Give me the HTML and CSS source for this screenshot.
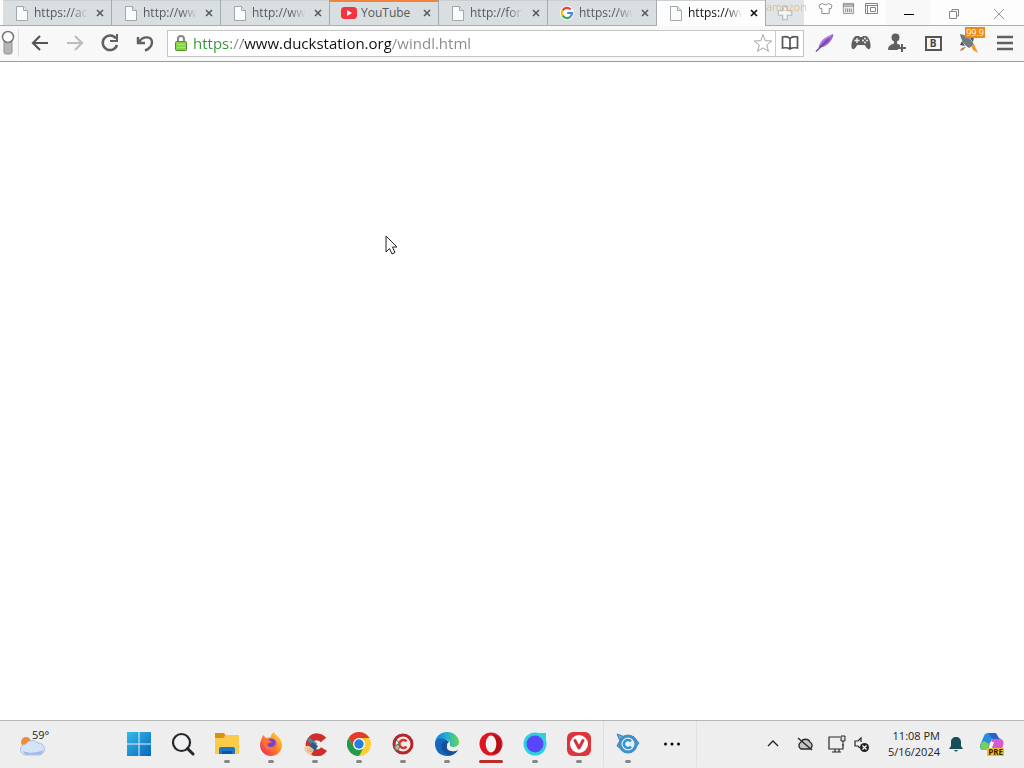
FILE: index.html
```html
<!DOCTYPE html>
<html lang="en">
<head>
<meta charset="utf-8">
<meta name="viewport" content="width=device-width, initial-scale=1">
<title>https://www.duckstation.org/windl.html</title>
<link rel="stylesheet" href="styles.css">
</head>
<body>
<svg class="defs" aria-hidden="true">
  <symbol id="page" viewBox="0 0 12 15"><path d="M.5.5h7l4 4v10H.5z" fill="#fafbfb" stroke="#a2a6a8"/><path d="M7.500.5v4h4" fill="#e2e4e5" stroke="#a2a6a8"/></symbol>
  <symbol id="cross" viewBox="0 0 8 8"><path d="M1 1l6 6M7 1L1 7" fill="none" stroke="currentColor" stroke-width="1.600"/></symbol>
</svg>
<header class="browser">
  <div class="titlebar">
    <nav class="tabs" aria-label="Tabs">
      <div class="tab"><svg class="fav"><use href="#page"/></svg><a class="label" href="#">https://ac</a><button class="close" aria-label="Close tab"><svg><use href="#cross"/></svg></button></div>
      <div class="tab"><svg class="fav"><use href="#page"/></svg><a class="label" href="#">http://ww</a><button class="close" aria-label="Close tab"><svg><use href="#cross"/></svg></button></div>
      <div class="tab"><svg class="fav"><use href="#page"/></svg><a class="label" href="#">http://ww</a><button class="close" aria-label="Close tab"><svg><use href="#cross"/></svg></button></div>
      <div class="tab loud"><svg class="fav wide" viewBox="0 0 16 12"><rect y="0" width="16" height="12" rx="3.500" fill="#f5333f"/><path d="M6 3l5 3-5 3z" fill="#fff"/></svg><a class="label plain" href="#">YouTube</a><button class="close" aria-label="Close tab"><svg><use href="#cross"/></svg></button></div>
      <div class="tab"><svg class="fav"><use href="#page"/></svg><a class="label" href="#">http://for</a><button class="close" aria-label="Close tab"><svg><use href="#cross"/></svg></button></div>
      <div class="tab"><svg class="fav round" viewBox="0 0 14 14"><circle cx="7" cy="7" r="7" fill="#fff"/><g fill="none" stroke-width="2.200"><path d="M2.600 4.500A5 5 0 0 1 10.600 3.400" stroke="#ea4335"/><path d="M2.600 4.500a5 5 0 0 0 0 5" stroke="#fbbc05"/><path d="M2.600 9.500a5 5 0 0 0 7.800 1.200" stroke="#34a853"/><path d="M10.400 10.700A5 5 0 0 0 12 7H7.200" stroke="#4285f4"/></g></svg><a class="label" href="#">https://ww</a><button class="close" aria-label="Close tab"><svg><use href="#cross"/></svg></button></div>
      <div class="tab active"><svg class="fav"><use href="#page"/></svg><a class="label" href="#" aria-current="page">https://ww</a><button class="close" aria-label="Close tab"><svg><use href="#cross"/></svg></button></div>
      <button class="newtab" aria-label="New tab"><span class="ghost">amazon</span><svg viewBox="0 0 16 16"><path d="M6 2h4v4h4v4h-4v4H6v-4H2V6h4z" fill="#f4f5f5" stroke="#b4b8ba"/></svg></button>
    </nav>
    <div class="tools">
      <button aria-label="Theme"><svg viewBox="0 0 16 14"><path d="M5 1.500C6 3.500 10 3.500 11 1.500l4 2-1 3.500h-2v5.500H4V7H2L1 3.500z" fill="#fff" stroke="#858585"/></svg></button>
      <button aria-label="Panel"><svg viewBox="0 0 14 14"><path d="M1.500 1.500h11v11h-11z" fill="#eee" stroke="#929292"/><path d="M1 3h12M1 4.500h12M4 7v4M6 7v4M8 7v4M10 7v4" stroke="#858585"/></svg></button>
      <button aria-label="Closed tabs"><svg viewBox="0 0 15 13"><path d="M1.500 1.500h12v10h-12z" fill="#fff" stroke="#858585"/><path d="M1 3.500h13M3.500 3v8M6.500 5.500h5v4h-5z" fill="none" stroke="#858585"/></svg></button>
    </div>
    <div class="window">
      <button class="min" aria-label="Minimize"><svg viewBox="0 0 12 12"><path d="M1 6.500h10" stroke="#000"/></svg></button>
      <button aria-label="Restore"><svg viewBox="0 0 12 12"><path d="M1.500 3.500h7v7h-7zM4 3V1.500h6.500V8H9" fill="none" stroke="#888"/></svg></button>
      <button aria-label="Close"><svg viewBox="0 0 12 12"><path d="M1 1l10 10M11 1L1 11" stroke="#999"/></svg></button>
    </div>
  </div>
  <div class="toolbar">
    <button class="panel" aria-label="Toggle panels"><svg viewBox="0 0 16 26"><rect x="4" y="6" width="8" height="18" rx="2" fill="#b5b5b5" stroke="#919191"/><circle cx="8" cy="7" r="5.500" fill="#fff" stroke="#777" stroke-width="1.500"/></svg></button>
    <div class="navs">
      <button aria-label="Back"><svg viewBox="0 0 20 20"><path d="M18 10H4M10 3l-7 7 7 7" fill="none" stroke="#555" stroke-width="2.200"/></svg></button>
      <button aria-label="Forward"><svg viewBox="0 0 20 20"><path d="M2 10h14M10 3l7 7-7 7" fill="none" stroke="#bdbdbd" stroke-width="2.200"/></svg></button>
      <button aria-label="Reload"><svg viewBox="0 0 20 20"><path d="M16 5.500A7.300 7.300 0 1 0 17 12" fill="none" stroke="#606060" stroke-width="2.500"/><path d="M18 1v8h-8V7h6V1z" fill="#606060"/></svg></button>
      <button aria-label="Undo"><svg viewBox="0 0 20 20"><path d="M4 9C8 2.500 17 3 17 9.500c0 4-4 7-7 8M3 4v6h7" fill="none" stroke="#606060" stroke-width="2.400"/></svg></button>
    </div>
    <form class="address">
      <svg class="lock" viewBox="0 0 12 16"><path d="M3 7V4a3 3 0 0 1 6 0v3" fill="none" stroke="#888" stroke-width="2"/><rect x=".5" y="6.500" width="11" height="9" rx="1" fill="#85d443" stroke="#4e8f21"/><path d="M2 9.500h8M2 12.500h8" stroke="#a5e76c"/></svg>
      <input class="url" type="text" aria-label="Address" value="https://www.duckstation.org/windl.html">
      <button type="button" class="star" aria-label="Bookmark"><svg viewBox="0 0 20 20"><path d="M10 1.500l2.300 6.200 6.500.3-5.100 4 1.800 6.400-5.500-3.600-5.500 3.600L6.300 12l-5.100-4 6.500-.3z" fill="#fff" stroke="#a5a5a5"/></svg></button>
      <button type="button" class="book" aria-label="Reader"><svg viewBox="0 0 18 16"><path d="M9 3.500C7 1.500 4 1.500 1.500 2v11c3-.5 5.500-.5 7.500 1 2-1.500 4.500-1.500 7.500-1V2C14 1.500 11 1.500 9 3.500zV14" fill="#fff" stroke="#555" stroke-width="1.700"/></svg></button>
    </form>
    <div class="ext">
      <button aria-label="Notes"><svg viewBox="0 0 20 20"><path d="M18.500 1C9 4 5 8 3.500 15 10 14.500 17.500 9 18.500 1z" fill="#9b60cc"/><path d="M1 18.500L14 6" stroke="#6f3c9f" stroke-width="1.200"/><path d="M5 12c2-5 7-8 11-9" fill="none" stroke="#c69ce6"/></svg></button>
      <button aria-label="Games"><svg viewBox="0 0 20 20"><path d="M5 3h3l1 1h2l1-1h3c3 1 5 7 4.500 11-.5 3-3 3-5-1l-1-1h-7l-1 1c-2 4-4.500 4-5 1C0 10 2 4 5 3z" fill="#606060"/><path d="M6 5v5M3.500 7.500h5" stroke="#eee" stroke-width="1.400"/><circle cx="14" cy="5.500" r="1" fill="#eee"/><circle cx="14" cy="9.500" r="1" fill="#eee"/><circle cx="12" cy="7.500" r="1" fill="#eee"/><circle cx="16" cy="7.500" r="1" fill="#eee"/></svg></button>
      <button aria-label="Add user"><svg viewBox="0 0 20 20"><circle cx="8.500" cy="4.500" r="4" fill="#606060"/><path d="M7 7h3v3.500l3 1.500v2h-2v3H1c0-4 2-5 6-6.500z" fill="#606060"/><path d="M15 11v8M11 15h8" stroke="#606060" stroke-width="2"/></svg></button>
      <button aria-label="Block"><span class="bbox">B</span></button>
      <button class="rocket" aria-label="Messages"><svg viewBox="0 0 20 20"><path d="M1 1c6 1 11 4 14 11l-5 3C5 12 2 7 1 1z" fill="#727a80"/><path d="M3 8l-2 4 5 1zM11 5l4-1-1 5z" fill="#4d5358"/><path d="M12 13l3-2 4 9-5-3z" fill="#f29a26"/><path d="M1 18c1-3 3-4 6-4l-3 3z" fill="#bb7544"/></svg><span class="badge">99.9</span></button>
      <button aria-label="Menu"><svg viewBox="0 0 20 20"><path d="M2 4h16M2 10h16M2 16h16" stroke="#606060" stroke-width="2.600"/></svg></button>
    </div>
  </div>
</header>
<main class="page">
  <svg class="pointer" viewBox="0 0 13 20" aria-hidden="true"><path d="M1 1v16l3.500-3.500 2.500 5.500 3-1.500L7.500 12H12z" fill="#fff" stroke="#222"/></svg>
</main>
<footer class="taskbar">
  <div class="left"><button class="weather" aria-label="Weather 59 degrees"><svg viewBox="0 0 26 20"><circle cx="6" cy="6" r="5" fill="#f08b36"/><path d="M7 19a6 5.500 0 0 1-1-11 7 6 0 0 1 12-1 6 6 0 0 1 1 12z" fill="#d5e3f8" stroke="#a7bfe5"/><path d="M3 15c6 3 15 2 20-1-1 4-3 4.500-5 4.500H7c-2 0-3-1-4-3.500z" fill="#9bb9ea"/></svg><span>59°</span></button></div>
  <nav class="apps" aria-label="Applications">
    <button aria-label="Start"><svg viewBox="0 0 24 24"><defs><linearGradient id="win" x2="1" y2="1"><stop stop-color="#35bced"/><stop offset="1" stop-color="#0766b8"/></linearGradient></defs><path d="M0 0h11.500v11.500H0zM12.500 0H24v11.500H12.500zM0 12.500h11.500V24H0zM12.500 12.500H24V24H12.500z" fill="url(#win)"/></svg></button>
    <button aria-label="Search"><svg viewBox="0 0 24 24"><circle cx="10.500" cy="10.500" r="8.500" fill="#edf3f5" stroke="#262626" stroke-width="2.200"/><path d="M16.500 16.500l5.500 5.500" stroke="#262626" stroke-width="3" stroke-linecap="round"/></svg></button>
    <button class="run" aria-label="File Explorer"><svg viewBox="0 0 24 24"><path d="M0 1h9l2 3h12v4H0z" fill="#d99112"/><path d="M0 6h8l3-3h13v19H0z" fill="#fdcb4a"/><path d="M4 22v-5q0-2 2-2h12q2 0 2 2v5z" fill="#1976c9"/><path d="M7 19h10v3H7z" fill="#0d57a2"/></svg></button>
    <button class="run" aria-label="Firefox"><svg viewBox="0 0 24 24"><defs><linearGradient id="fx" x1="1" x2="0" y2="1"><stop stop-color="#ffe344"/><stop offset=".45" stop-color="#ff8a25"/><stop offset="1" stop-color="#eb1964"/></linearGradient></defs><path d="M4 3l3 3 5-1c0-2 1-4 3-5 0 3 8 5 8 13A11 11 0 0 1 1 13C1 9 3 7 4 3z" fill="url(#fx)"/><circle cx="12" cy="12" r="5.500" fill="#7344ca"/><path d="M4 7c3-1 6 0 7 2l3 1-4 1c-2 1-2 4 1 4 4 0 6-2 5-6 3 5 0 9-4 9-5 0-8-4-8-11z" fill="#ff7139"/></svg></button>
    <button class="run" aria-label="CCleaner"><svg viewBox="0 0 24 24"><path d="M20.500 8a8 8 0 1 0 .5 9" fill="none" stroke="#cf2f2a" stroke-width="7"/><path d="M5 7l8 6" stroke="#4389ae" stroke-width="4"/><path d="M9 10l6 4-3 5-5-4z" fill="#275d86"/><path d="M1 16c3-4 6-2 10 2l-3 5c-3 0-6-3-7-7z" fill="#efc9a1"/><path d="M4 18l5 2M6 16l4 3" stroke="#d4a67b"/></svg></button>
    <button class="run" aria-label="Chrome"><svg viewBox="0 0 24 24"><circle cx="12" cy="12" r="12" fill="#ffcd35"/><path d="M1.600 6A12 12 0 0 1 22.400 6H12L7 15z" fill="#e33b2e"/><path d="M1.600 6A12 12 0 0 0 12 24l5-9H7z" fill="#249b4b"/><circle cx="12" cy="12" r="6" fill="#fff"/><circle cx="12" cy="12" r="4.700" fill="#247be0"/></svg></button>
    <button class="run" aria-label="CCleaner Browser"><svg viewBox="0 0 24 24"><circle cx="12" cy="12" r="9" fill="#f2ebe6" stroke="#b72628" stroke-width="3"/><path d="M15.500 9.500a4 4 0 1 0 0 5" fill="none" stroke="#d63733" stroke-width="2.500"/><path d="M5 8l4 3M3 15l4-3 2 3-3 4z" fill="#d5ad82" stroke="#496e77"/></svg></button>
    <button class="run" aria-label="Edge"><svg viewBox="0 0 24 24"><defs><linearGradient id="ed" x2="1"><stop stop-color="#1479d0"/><stop offset=".5" stop-color="#23b1d4"/><stop offset="1" stop-color="#68d64c"/></linearGradient></defs><path d="M0 12C0 5 5 0 12 0s12 5 12 10c0 4-3 5-6 5s-4-1-3-3c1-3-5-6-8-3z" fill="url(#ed)"/><path d="M0 12c1-7 10-7 14-2-5 0-6 9 1 10 3 .5 5-.5 8-2-3 4-6 6-11 6C5 24 0 19 0 12z" fill="#1267be"/><path d="M7 11c-2 6 2 12 8 12 3 0 5-1 8-5-7 3-12 0-11-4 0-2 0-3 2-4-3-2-5-1-7 1z" fill="#15519b"/><path d="M12 14c1-2 2-3 3-2-1 2 0 3 3 3 2 0 4 0 5-1v4c-6 3-11 0-11-4z" fill="#eee"/></svg></button>
    <button class="run current" aria-label="Opera"><svg viewBox="0 0 24 24"><circle cx="12" cy="12" r="11.500" fill="#df1622"/><path d="M12 3c7 0 7 18 0 18 4 2 8 0 9-3 3-6 0-14-5-15z" fill="#b50f19"/><ellipse cx="12" cy="12" rx="5.300" ry="8.500" fill="#f5f2f2"/></svg></button>
    <button class="run" aria-label="Maxthon"><svg viewBox="0 0 24 24"><circle cx="12" cy="12" r="11.500" fill="#2ed0de"/><path d="M16 1h7v8z" fill="#2ed0de"/><circle cx="12" cy="12" r="8.500" fill="#5946fb"/></svg></button>
    <button class="run" aria-label="Vivaldi"><svg viewBox="0 0 24 24"><rect width="24" height="24" rx="6" fill="#df343c"/><circle cx="12" cy="12" r="9" fill="#fff"/><path d="M8 8.500l4 7.500 4-7.500" fill="none" stroke="#d3333b" stroke-width="3" stroke-linecap="round" stroke-linejoin="round"/></svg></button>
  </nav>
  <div class="more">
    <button class="run" aria-label="Cyberfox"><svg viewBox="0 0 24 24"><path d="M4 9L1 2l8 3M17 4l6 7-3 4M3 10l-2 4 4 3" fill="#68aad8" stroke="#3584bf"/><circle cx="12" cy="12" r="8" fill="#e3f1fa" stroke="#3f8fc9" stroke-width="3"/><path d="M15 9.500a4 4 0 1 0 0 5" fill="none" stroke="#3891d1" stroke-width="2.500"/></svg></button>
    <button aria-label="More apps"><svg viewBox="0 0 24 24"><circle cx="5.500" cy="12" r="1.500"/><circle cx="12" cy="12" r="1.500"/><circle cx="18.500" cy="12" r="1.500"/></svg></button>
  </div>
  <div class="tray">
    <button aria-label="Show hidden icons"><svg viewBox="0 0 18 18"><path d="M4 11l5-5 5 5" fill="none" stroke="#222" stroke-width="1.400"/></svg></button>
    <button aria-label="Cloud offline"><svg viewBox="0 0 18 18"><path d="M5 14a4 4 0 0 1 0-7 5 5 0 0 1 9 0 4 4 0 0 1 0 7z" fill="#c4c4c4" stroke="#292929" stroke-width="1.400"/><path d="M2 3l14 12" stroke="#292929" stroke-width="1.400"/></svg></button>
    <div class="status"><button aria-label="Network"><svg viewBox="0 0 18 18"><path d="M12 2H1v12h14V9M4 17h9M7 14v3M11 14v3" fill="none" stroke="#292929" stroke-width="1.200"/><path d="M13 1h4v5h-4zM15 6v5" fill="#ddd" stroke="#292929"/></svg></button><button aria-label="Sound muted"><svg viewBox="0 0 18 18"><path d="M9 7V3L6 6H3v5h3l2 2" fill="none" stroke="#292929" stroke-width="1.200"/><circle cx="12.500" cy="12.500" r="4.500" fill="#222"/><path d="M10.500 10.500l4 4M14.500 10.500l-4 4" stroke="#fff" stroke-width="1.200"/></svg></button></div>
    <button class="clock"><time datetime="2024-05-16T23:08">11:08 PM<br>5/16/2024</time></button>
    <button class="bell" aria-label="Notifications"><svg viewBox="0 0 16 16"><path d="M8 1c-3 0-5 2-5 5v4l-2 3h14l-2-3V6c0-3-2-5-5-5zM6 14h4q-2 3-4 0z" fill="#164e59"/></svg></button>
    <button class="copilot" aria-label="Copilot"><svg viewBox="0 0 24 24"><path d="M8 1h8l3 6h-7L8 18H3c-3 0-4-4-2-7L4 4q1-3 4-3z" fill="#278de0"/><path d="M1 11l3-2 5 3-1 6H3c-3 0-3-4-2-7z" fill="#78ce59"/><path d="M12 7h8c4 0 4 4 3 7l-2 6H8c3 0 3-4 4-13z" fill="#d75bcc"/><path d="M8 1h6c4 0 3 5 7 6h-7c-3 0-4-4-6-6z" fill="#2864c7"/><path d="M10 10h4l-2 6H9z" fill="#f1eef4"/></svg><span>PRE</span></button>
  </div>
</footer>
</body>
</html>
```
FILE: styles.css
```css
* { box-sizing: border-box; }
body { margin: 0; min-height: 100vh; display: flex; flex-direction: column; background: #fff; font-family: "Open Sans", "Noto Sans", sans-serif; font-size: 12px; color: #222; }
button { margin: 0; padding: 0; border: 0; background: none; font: inherit; color: inherit; display: flex; align-items: center; justify-content: center; flex: none; }
svg { display: block; flex: none; }
.defs { position: absolute; width: 0; height: 0; }

.titlebar { display: flex; height: 26px; background: #fdfdfd; border-bottom: 1px solid #a9acae; }
.tabs { display: flex; min-width: 0; padding-left: 3px; gap: 1px; }
.tab { display: flex; align-items: center; flex: 0 1 108px; width: 108px; min-width: 0; height: 25px; padding: 0 7px 0 13px; background: #d9dfe1; border-top: 1px solid #c9cfd2; box-shadow: 1px 0 #a4abae; color: #555b5e; }
.tab.active { height: 26px; padding-bottom: 1px; background: #fdfdfd; color: #111; }
.tab.loud { border-top: 2px solid #f28339; padding-bottom: 1px; }
.fav { width: 12px; height: 15px; margin-right: 6px; }
.fav.wide { width: 16px; height: 12px; margin: 0 4px 0 -2px; }
.fav.round { width: 14px; height: 14px; margin: 0 5px 0 -1px; }
.label { flex: 1; min-width: 0; overflow: hidden; white-space: nowrap; color: inherit; text-decoration: none; line-height: 18px; mask-image: linear-gradient(to right, #000 70%, transparent); }
.label.plain { mask-image: none; }
.close { width: 9px; height: 16px; margin-left: 7px; }
.close svg { width: 8px; height: 8px; }
.newtab { position: relative; width: 38px; height: 25px; background: #e2e5e7; color: #dcb36b; }
.newtab svg { width: 18px; height: 18px; }
.ghost { position: absolute; top: 0; left: 0; line-height: 14px; font-size: 11px; opacity: .7; }
.tools { display: flex; gap: 7px; padding: 1px 0 0 13px; align-items: flex-start; }
.tools button { width: 16px; height: 14px; }
.tools svg { width: 15px; height: 13px; }
.window { display: flex; margin-left: auto; padding-right: 3px; }
.window button { width: 45px; height: 25px; padding-top: 3px; }
.window .min { background: #f8f8f8; }
.window svg { width: 12px; height: 12px; }

.toolbar { display: flex; align-items: center; height: 36px; padding: 0 9px 1px 0; background: #f8f8f8; border-bottom: 1px solid #9b9b9b; }
.panel { width: 19px; height: 28px; padding-right: 2px; border-right: 1px solid #ddd; }
.panel svg { width: 16px; height: 26px; }
.navs { display: flex; gap: 15px; padding: 0 12px 0 11px; }
.navs svg, .ext svg { width: 20px; height: 20px; }
.address { display: flex; align-items: center; flex: 1; min-width: 0; height: 27px; margin: 0; padding-left: 7px; background: #fff; border: 1px solid #c4c4c4; }
.lock { width: 12px; height: 16px; margin-right: 6px; }
.url { flex: 1; min-width: 0; height: 25px; padding: 0; border: 0; outline: 0; font: 15px/24px "Open Sans", "Noto Sans", sans-serif; color: transparent; background: linear-gradient(to right, #319334 0 38px, #888 38px 50px, #111 50px 198px, #888 198px); background-clip: text; }
.star { width: 24px; height: 25px; }
.star svg { width: 20px; height: 20px; }
.book { width: 28px; height: 25px; border-left: 1px solid #ccc; }
.book svg { width: 18px; height: 16px; }
.ext { display: flex; gap: 16px; padding-left: 11px; }
.ext button { width: 20px; height: 24px; }
.bbox { width: 17px; height: 15px; border: 2px solid #555; font-size: 10px; line-height: 11px; font-weight: 700; color: #444; }
.rocket { position: relative; }
.badge { position: absolute; top: -4px; right: -6px; padding: 0 1px; background: #f18a15; color: #fff; font-size: 9px; line-height: 11px; }

.page { position: relative; flex: 1; }
.pointer { position: absolute; left: 385px; top: 173px; width: 13px; height: 20px; }

.taskbar { display: flex; align-items: stretch; height: 48px; padding-bottom: 1px; background: #eee; border-top: 1px solid #b5b5b5; }
.left { flex: 0 1 117px; padding-left: 18px; display: flex; }
.weather { position: relative; width: 30px; }
.weather svg { width: 26px; height: 20px; margin-top: 4px; }
.weather span { position: absolute; top: 7px; left: 14px; line-height: 13px; font-size: 11px; }
.apps, .more { display: flex; }
.apps { padding-right: 2px; }
.more { padding: 0 2px; border: 1px solid #e0e0e0; border-width: 0 1px; }
.apps button, .more button { position: relative; width: 44px; }
.apps svg, .more svg { width: 24px; height: 24px; }
.run::after { content: ""; position: absolute; bottom: 4px; left: 19px; width: 6px; height: 3px; border-radius: 2px; background: #888; }
.current::after { left: 10px; width: 24px; background: #bd2c26; }
.tray { display: flex; align-items: center; margin-left: auto; padding-right: 20px; gap: 8px; }
.tray button { width: 24px; height: 32px; }
.tray svg { width: 18px; height: 18px; }
.status { display: flex; }
.tray .clock { width: auto; margin-left: 7px; font-size: 11px; line-height: 16px; text-align: right; }
.tray .bell { width: 16px; }
.tray .bell svg { width: 16px; height: 16px; }
.tray .copilot { position: relative; margin-left: 8px; }
.tray .copilot svg { width: 24px; height: 24px; }
.copilot span { position: absolute; right: 0; bottom: 4px; padding: 0 1px; background: #f7bd25; color: #332200; font-size: 8px; line-height: 8px; font-weight: 700; }
```
